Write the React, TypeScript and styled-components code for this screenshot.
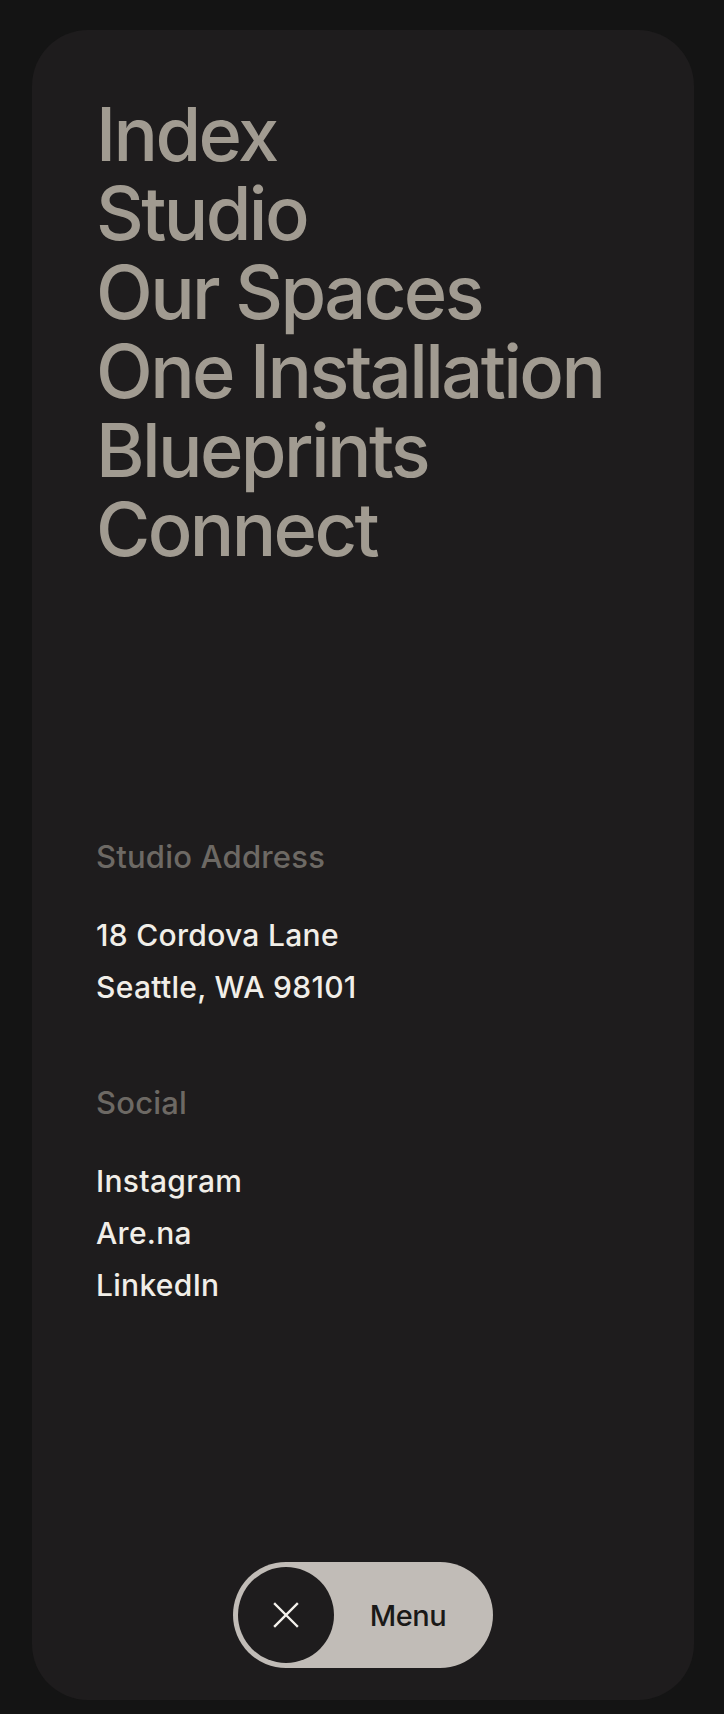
import styled, { createGlobalStyle } from "styled-components";

const GlobalStyle = createGlobalStyle`
  html, body {
    margin: 0;
    padding: 0;
    background: #141414;
  }
  body {
    font-family: Inter, "Noto Sans", "Liberation Sans", sans-serif;
    -webkit-font-smoothing: antialiased;
  }
`;

const Page = styled.div`
  padding: 30px 30px 14px 32px;
`;

const Panel = styled.div`
  height: 1670px;
  box-sizing: border-box;
  background: #1e1c1d;
  border-radius: 56px;
  padding: 65px 64px 32px 64px;
  display: flex;
  flex-direction: column;
`;

const Nav = styled.nav`
  display: flex;
  flex-direction: column;
`;

const NavLink = styled.a`
  font-size: 74px;
  line-height: 79px;
  font-weight: 500;
  letter-spacing: -2.6px;
  color: #a19b91;
  text-decoration: none;
  white-space: nowrap;
`;

const Info = styled.section<{ $top: number }>`
  margin-top: ${(p) => p.$top}px;
  display: flex;
  flex-direction: column;
`;

const Label = styled.h3`
  margin: 0 0 34px;
  font-size: 31px;
  line-height: 36px;
  font-weight: 500;
  letter-spacing: 0.2px;
  color: #6d6964;
`;

const Line = styled.a`
  font-size: 30px;
  line-height: 52px;
  font-weight: 500;
  letter-spacing: 0.3px;
  color: #f1eee8;
  text-decoration: none;
`;

const Footer = styled.div`
  margin-top: auto;
  display: flex;
  justify-content: center;
`;

const MenuButton = styled.button`
  width: 260px;
  height: 106px;
  border-radius: 53px;
  border: none;
  background: #c1bcb7;
  padding: 5px;
  display: flex;
  align-items: center;
  cursor: pointer;
`;

const CloseCircle = styled.span`
  width: 96px;
  height: 96px;
  border-radius: 50%;
  background: #1e1c1d;
  display: flex;
  align-items: center;
  justify-content: center;
  flex-shrink: 0;
`;

const MenuText = styled.span`
  flex: 1;
  text-align: center;
  padding-right: 6px;
  font-family: Inter, "Noto Sans", sans-serif;
  font-size: 29px;
  font-weight: 500;
  letter-spacing: -0.5px;
  color: #1a1918;
`;

const links = [
  "Index",
  "Studio",
  "Our Spaces",
  "One Installation",
  "Blueprints",
  "Connect",
];

function App() {
  return (
    <>
      <GlobalStyle />
      <Page>
        <Panel>
          <Nav>
            {links.map((l) => (
              <NavLink key={l}>{l}</NavLink>
            ))}
          </Nav>

          <Info $top={270}>
            <Label>Studio Address</Label>
            <Line>18 Cordova Lane</Line>
            <Line>Seattle, WA 98101</Line>
          </Info>

          <Info $top={72}>
            <Label>Social</Label>
            <Line>Instagram</Line>
            <Line>Are.na</Line>
            <Line>LinkedIn</Line>
          </Info>

          <Footer>
            <MenuButton>
              <CloseCircle>
                <svg width="26" height="26" viewBox="0 0 26 26">
                  <path
                    d="M2 2 L24 24 M24 2 L2 24"
                    stroke="#f4f1ec"
                    strokeWidth="2.4"
                    strokeLinecap="square"
                  />
                </svg>
              </CloseCircle>
              <MenuText>Menu</MenuText>
            </MenuButton>
          </Footer>
        </Panel>
      </Page>
    </>
  );
}

export default App;
